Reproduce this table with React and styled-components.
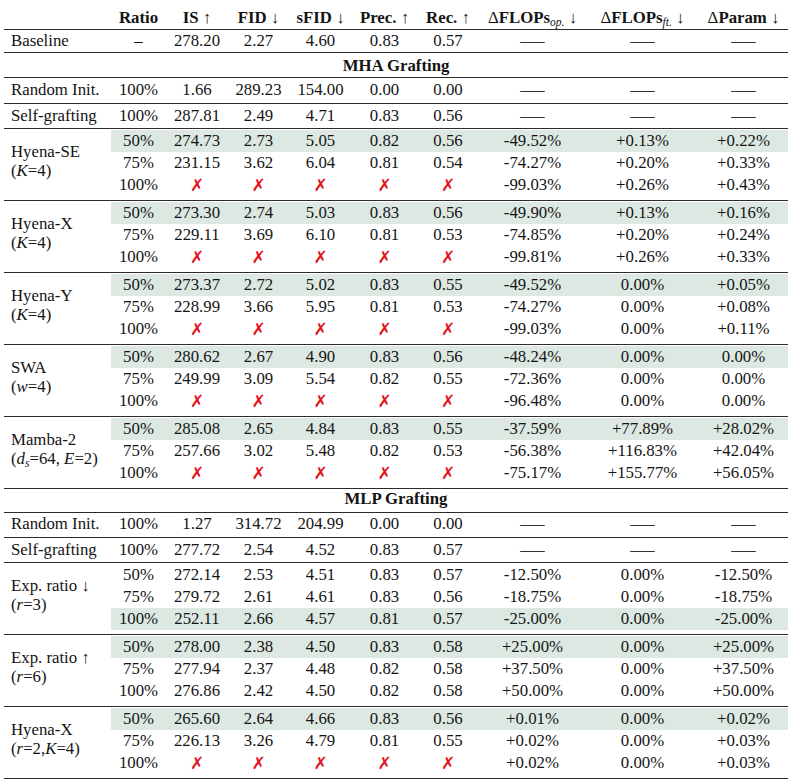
import React from "react";
import styled, { createGlobalStyle } from "styled-components";

const COLS = "107px 55px 62px 61px 63px 65px 62px 107px 113px 89px";
const SHADE = "#dce8e1";
const RULE = "#2b2b2b";

const Global = createGlobalStyle`
  html, body { margin: 0; padding: 0; background: #fff; }
`;

const Table = styled.div`
  width: 784px;
  margin-left: 4px;
  font-family: "Liberation Serif", "Times New Roman", serif;
  font-size: 16.8px;
  color: #141414;
`;

const Row = styled.div`
  display: grid;
  grid-template-columns: ${COLS};
  line-height: 20px;
  padding: ${(p) => p.$pad || "2px 0 2px"};
  border-bottom: 1px solid ${RULE};
`;

const HeadCell = styled.div`
  text-align: center;
  font-weight: bold;
  white-space: nowrap;
`;

const Plain = styled.span`
  font-weight: normal;
`;

const Sub = styled.sub`
  font-weight: normal;
  font-style: italic;
  font-size: 11.5px;
  vertical-align: -3px;
  line-height: 0;
`;

const Section = styled.div`
  grid-column: 1 / -1;
  text-align: center;
  font-weight: bold;
`;

const Label = styled.div`
  text-align: left;
  padding-left: 7px;
  white-space: nowrap;
`;

const Cell = styled.div`
  text-align: center;
  white-space: nowrap;
  background: ${(p) => (p.$shade ? SHADE : "transparent")};
`;

const Group = styled.div`
  display: grid;
  grid-template-columns: ${COLS};
  grid-template-rows: repeat(3, 22px);
  line-height: 22px;
  padding: 1px 0 4px;
  border-bottom: 1px solid ${RULE};
`;

const GroupLabel = styled.div`
  grid-column: 1;
  grid-row: 1 / 4;
  display: flex;
  flex-direction: column;
  justify-content: center;
  padding-left: 7px;
  padding-bottom: 5px;
  line-height: 19px;
  white-space: nowrap;
`;

const I = styled.i`
  font-style: italic;
`;

const Cross = styled.span`
  display: inline-block;
  color: #e5141b;
  font-family: "DejaVu Sans", sans-serif;
  font-size: 17px;
  font-weight: bold;
  line-height: 22px;
`;

const Dash = styled.span`
  display: inline-block;
  color: #333;
  transform: scaleX(1.45);
`;

const X = "X";
const D = "D";

const renderVal = (v) => {
  if (v === X) return <Cross>✗</Cross>;
  if (v === D) return <Dash>—</Dash>;
  return v;
};

const SingleRow = ({ label, values, pad }) => (
  <Row $pad={pad}>
    <Label>{label}</Label>
    {values.map((v, i) => (
      <Cell key={i}>{renderVal(v)}</Cell>
    ))}
  </Row>
);

const RowGroup = ({ name, sub, rows, shade }) => (
  <Group>
    <GroupLabel>
      <span>{name}</span>
      <span>{sub}</span>
    </GroupLabel>
    {rows.map((r, ri) =>
      r.map((v, ci) => (
        <Cell key={`${ri}-${ci}`} $shade={shade === ri}>
          {renderVal(v)}
        </Cell>
      ))
    )}
  </Group>
);

const xs = [X, X, X, X, X];

const mha = [
  {
    name: "Hyena-SE",
    sub: <>(<I>K</I>=4)</>,
    shade: 0,
    rows: [
      ["50%", "274.73", "2.73", "5.05", "0.82", "0.56", "-49.52%", "+0.13%", "+0.22%"],
      ["75%", "231.15", "3.62", "6.04", "0.81", "0.54", "-74.27%", "+0.20%", "+0.33%"],
      ["100%", ...xs, "-99.03%", "+0.26%", "+0.43%"],
    ],
  },
  {
    name: "Hyena-X",
    sub: <>(<I>K</I>=4)</>,
    shade: 0,
    rows: [
      ["50%", "273.30", "2.74", "5.03", "0.83", "0.56", "-49.90%", "+0.13%", "+0.16%"],
      ["75%", "229.11", "3.69", "6.10", "0.81", "0.53", "-74.85%", "+0.20%", "+0.24%"],
      ["100%", ...xs, "-99.81%", "+0.26%", "+0.33%"],
    ],
  },
  {
    name: "Hyena-Y",
    sub: <>(<I>K</I>=4)</>,
    shade: 0,
    rows: [
      ["50%", "273.37", "2.72", "5.02", "0.83", "0.55", "-49.52%", "0.00%", "+0.05%"],
      ["75%", "228.99", "3.66", "5.95", "0.81", "0.53", "-74.27%", "0.00%", "+0.08%"],
      ["100%", ...xs, "-99.03%", "0.00%", "+0.11%"],
    ],
  },
  {
    name: "SWA",
    sub: <>(<I>w</I>=4)</>,
    shade: 0,
    rows: [
      ["50%", "280.62", "2.67", "4.90", "0.83", "0.56", "-48.24%", "0.00%", "0.00%"],
      ["75%", "249.99", "3.09", "5.54", "0.82", "0.55", "-72.36%", "0.00%", "0.00%"],
      ["100%", ...xs, "-96.48%", "0.00%", "0.00%"],
    ],
  },
  {
    name: "Mamba-2",
    sub: (
      <>
        (<I>d</I>
        <Sub>s</Sub>=64, <I>E</I>=2)
      </>
    ),
    shade: 0,
    rows: [
      ["50%", "285.08", "2.65", "4.84", "0.83", "0.55", "-37.59%", "+77.89%", "+28.02%"],
      ["75%", "257.66", "3.02", "5.48", "0.82", "0.53", "-56.38%", "+116.83%", "+42.04%"],
      ["100%", ...xs, "-75.17%", "+155.77%", "+56.05%"],
    ],
  },
];

const mlp = [
  {
    name: "Exp. ratio ↓",
    sub: <>(<I>r</I>=3)</>,
    shade: 2,
    rows: [
      ["50%", "272.14", "2.53", "4.51", "0.83", "0.57", "-12.50%", "0.00%", "-12.50%"],
      ["75%", "279.72", "2.61", "4.61", "0.83", "0.56", "-18.75%", "0.00%", "-18.75%"],
      ["100%", "252.11", "2.66", "4.57", "0.81", "0.57", "-25.00%", "0.00%", "-25.00%"],
    ],
  },
  {
    name: "Exp. ratio ↑",
    sub: <>(<I>r</I>=6)</>,
    shade: 0,
    rows: [
      ["50%", "278.00", "2.38", "4.50", "0.83", "0.58", "+25.00%", "0.00%", "+25.00%"],
      ["75%", "277.94", "2.37", "4.48", "0.82", "0.58", "+37.50%", "0.00%", "+37.50%"],
      ["100%", "276.86", "2.42", "4.50", "0.82", "0.58", "+50.00%", "0.00%", "+50.00%"],
    ],
  },
  {
    name: "Hyena-X",
    sub: <>(<I>r</I>=2,<I>K</I>=4)</>,
    shade: 0,
    rows: [
      ["50%", "265.60", "2.64", "4.66", "0.83", "0.56", "+0.01%", "0.00%", "+0.02%"],
      ["75%", "226.13", "3.26", "4.79", "0.81", "0.55", "+0.02%", "0.00%", "+0.03%"],
      ["100%", ...xs, "+0.02%", "0.00%", "+0.03%"],
    ],
  },
];

export default function App() {
  return (
    <>
      <Global />
      <Table>
        <Row $pad="8px 0 1px">
          <HeadCell />
          <HeadCell>Ratio</HeadCell>
          <HeadCell>IS <Plain>↑</Plain></HeadCell>
          <HeadCell>FID <Plain>↓</Plain></HeadCell>
          <HeadCell>sFID <Plain>↓</Plain></HeadCell>
          <HeadCell>Prec. <Plain>↑</Plain></HeadCell>
          <HeadCell>Rec. <Plain>↑</Plain></HeadCell>
          <HeadCell>
            <Plain>Δ</Plain>FLOPs<Sub>op.</Sub> <Plain>↓</Plain>
          </HeadCell>
          <HeadCell>
            <Plain>Δ</Plain>FLOPs<Sub>ft.</Sub> <Plain>↓</Plain>
          </HeadCell>
          <HeadCell>
            <Plain>Δ</Plain>Param <Plain>↓</Plain>
          </HeadCell>
        </Row>
        <SingleRow
          pad="1px 0 1px"
          label="Baseline"
          values={["–", "278.20", "2.27", "4.60", "0.83", "0.57", D, D, D]}
        />
        <Row $pad="3px 0 1px">
          <Section>MHA Grafting</Section>
        </Row>
        <SingleRow
          pad="2px 0 3px"
          label="Random Init."
          values={["100%", "1.66", "289.23", "154.00", "0.00", "0.00", D, D, D]}
        />
        <SingleRow
          pad="2px 0 2px"
          label="Self-grafting"
          values={["100%", "287.81", "2.49", "4.71", "0.83", "0.56", D, D, D]}
        />
        {mha.map((g, i) => (
          <RowGroup key={i} {...g} />
        ))}
        <Row $pad="0 0 3px">
          <Section>MLP Grafting</Section>
        </Row>
        <SingleRow
          pad="1px 0 3px"
          label="Random Init."
          values={["100%", "1.27", "314.72", "204.99", "0.00", "0.00", D, D, D]}
        />
        <SingleRow
          pad="2px 0 2px"
          label="Self-grafting"
          values={["100%", "277.72", "2.54", "4.52", "0.83", "0.57", D, D, D]}
        />
        {mlp.map((g, i) => (
          <RowGroup key={i} {...g} />
        ))}
      </Table>
    </>
  );
}
